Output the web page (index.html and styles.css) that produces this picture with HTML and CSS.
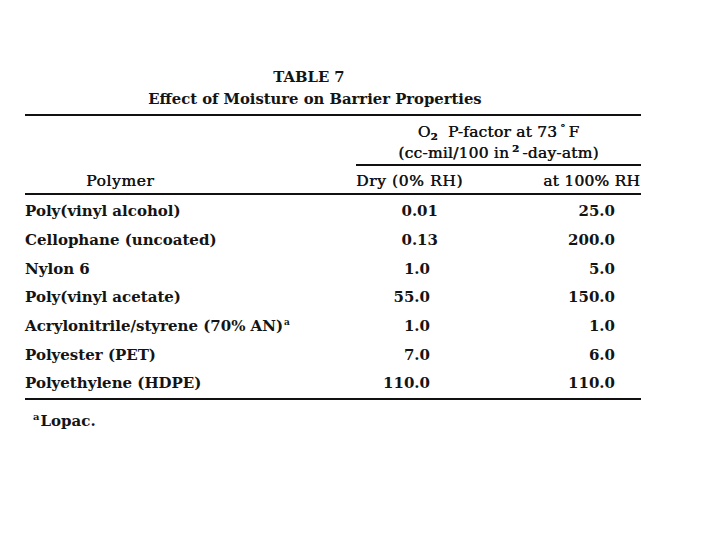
FILE: index.html
```html
<!DOCTYPE html>
<html>
<head>
<meta charset="utf-8">
<link rel="stylesheet" href="styles.css">
</head>
<body>
<div class="page">
  <div class="caption">
    <div class="cap-num">TABLE 7</div>
    <div class="cap-title">Effect of Moisture on Barrier Properties</div>
  </div>
  <div class="table">
    <div class="group-head">
      <div class="spacer"></div>
      <div class="group">
        <div>O<sub>2</sub> P-factor at 73<sup>°</sup>F</div>
        <div>(cc-mil/100 in<sup>2</sup>-day-atm)</div>
      </div>
    </div>
    <div class="row head">
      <div class="c-name c-poly">Polymer</div>
      <div class="c-dry">Dry (0% RH)</div>
      <div class="c-wet">at 100% RH</div>
    </div>
    <div class="body">
      <div class="row"><div class="c-name">Poly(vinyl alcohol)</div><div class="c-dry"><span class="num d2">0.01</span></div><div class="c-wet"><span class="num">25.0</span></div></div>
      <div class="row"><div class="c-name">Cellophane (uncoated)</div><div class="c-dry"><span class="num d2">0.13</span></div><div class="c-wet"><span class="num">200.0</span></div></div>
      <div class="row"><div class="c-name">Nylon 6</div><div class="c-dry"><span class="num">1.0</span></div><div class="c-wet"><span class="num">5.0</span></div></div>
      <div class="row"><div class="c-name">Poly(vinyl acetate)</div><div class="c-dry"><span class="num">55.0</span></div><div class="c-wet"><span class="num">150.0</span></div></div>
      <div class="row"><div class="c-name">Acrylonitrile/styrene (70% AN)<sup>a</sup></div><div class="c-dry"><span class="num">1.0</span></div><div class="c-wet"><span class="num">1.0</span></div></div>
      <div class="row"><div class="c-name">Polyester (PET)</div><div class="c-dry"><span class="num">7.0</span></div><div class="c-wet"><span class="num">6.0</span></div></div>
      <div class="row"><div class="c-name">Polyethylene (HDPE)</div><div class="c-dry"><span class="num">110.0</span></div><div class="c-wet"><span class="num">110.0</span></div></div>
    </div>
  </div>
  <div class="foot"><sup>a</sup>Lopac.</div>
</div>
</body>
</html>
```
FILE: styles.css
```css
html, body {
  margin: 0;
  padding: 0;
  background: #ffffff;
}
body {
  font-family: "DejaVu Serif", "Liberation Serif", serif;
  font-size: 15px;
  font-weight: bold;
  color: #141414;
}
.page {
  width: 616px;
  padding: 66px 0 0 25px;
}
.caption {
  text-align: center;
  padding-right: 36px;
  line-height: 22px;
  font-size: 14.8px;
}
.cap-num {
  padding-right: 12px;
}
.table {
  margin-top: 4px;
  border-top: 2px solid #111;
}
.group-head {
  display: grid;
  grid-template-columns: 331px 285px;
}
.group {
  text-align: center;
  border-bottom: 2px solid #111;
  line-height: 21px;
  padding: 6px 0 0;
  font-weight: normal;
  font-size: 15.5px;
  letter-spacing: 0.2px;
  text-shadow: 0.4px 0 0 #141414;
}
.group sub {
  font-size: 10px;
  vertical-align: -3px;
  line-height: 0;
  margin-right: 5px;
  font-weight: bold;
}
.group sup {
  font-size: 10px;
  vertical-align: 6px;
  line-height: 0;
  margin: 0 3px;
  font-weight: bold;
}
.row {
  display: grid;
  grid-template-columns: 331px 144px 141px;
  height: 28.67px;
  align-items: center;
}
.head {
  height: 27px;
  box-sizing: content-box;
  padding-top: 0;
  border-bottom: 2px solid #111;
  font-weight: normal;
  font-size: 15.5px;
  letter-spacing: 0.6px;
  text-shadow: 0.4px 0 0 #141414;
  align-items: end;
}
.head > div {
  padding-bottom: 3px;
}
.c-poly {
  padding-left: 61px;
}
.body {
  padding-top: 2px;
  border-bottom: 2px solid #111;
}
.c-name sup {
  font-size: 9px;
  vertical-align: 6px;
  line-height: 0;
  margin-left: 1px;
}
.c-dry {
  text-align: right;
  padding-right: 70px;
}
.head .c-dry {
  text-align: left;
  padding-right: 0;
}
.c-wet {
  text-align: right;
  padding-right: 26px;
}
.head .c-wet {
  padding-right: 1px;
  letter-spacing: 0.2px;
}
.num {
  display: inline-block;
}
.num.d2 {
  margin-right: -8px;
}
.foot {
  padding: 12px 0 0 8px;
  line-height: 18px;
}
.foot sup {
  font-size: 10px;
  vertical-align: 6px;
  line-height: 0;
  margin-right: 1px;
}
```
